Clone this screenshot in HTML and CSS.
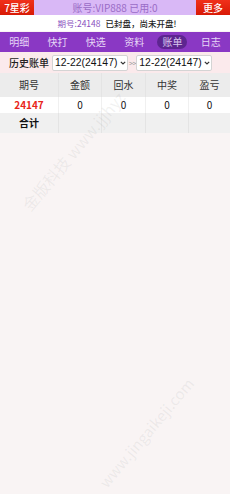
FILE: index.html
```html
<!DOCTYPE html>
<html lang="zh">
<head>
<meta charset="utf-8">
<link rel="stylesheet" href="styles.css">
</head>
<body>
<div class="page">
  <div class="topbar">
    <div class="btn">7星彩</div>
    <div class="account">账号:VIP888 已用:0</div>
    <div class="btn">更多</div>
  </div>
  <div class="status"><span class="lbl">期号:24148</span><span class="closed">已封盘，尚未开盘!</span></div>
  <div class="nav">
    <span>明细</span><span>快打</span><span>快选</span><span>资料</span><span class="active">账单</span><span>日志</span>
  </div>
  <div class="history">
    <span class="hlabel">历史账单</span>
    <span class="selwrap">
      <select class="sel"><option>12-22(24147)</option></select>
      <svg class="chev" width="6" height="4" viewBox="0 0 6 4"><path d="M0.8 0.8 L3 3 L5.2 0.8" fill="none" stroke="#333" stroke-width="1.2"/></svg>
    </span>
    <span class="arrow">&gt; &gt;</span>
    <span class="selwrap">
      <select class="sel"><option>12-22(24147)</option></select>
      <svg class="chev" width="6" height="4" viewBox="0 0 6 4"><path d="M0.8 0.8 L3 3 L5.2 0.8" fill="none" stroke="#333" stroke-width="1.2"/></svg>
    </span>
  </div>
  <div class="table">
    <div class="row head"><div>期号</div><div>金额</div><div>回水</div><div>中奖</div><div>盈亏</div></div>
    <div class="row data"><div class="issue">24147</div><div>0</div><div>0</div><div>0</div><div>0</div></div>
    <div class="row total"><div class="sum">合计</div><div></div><div></div><div></div><div></div></div>
  </div>
  <div class="wm wm1">金版科技 www.jjjhyz</div>
  <div class="wm wm2">www.jingaikeji.com</div>
</div>
</body>
</html>
```
FILE: styles.css
```css
html, body { margin: 0; padding: 0; }
body {
  width: 230px; height: 494px; overflow: hidden;
  background: #f9f4f4;
  font-family: "Noto Sans CJK SC", "Liberation Sans", sans-serif;
}
.page { position: relative; width: 230px; height: 494px; overflow: hidden; }
.topbar {
  display: flex; height: 15px; background: #d9b8f6; align-items: stretch;
}
.btn {
  width: 34px; color: #fff; font-size: 10px; line-height: 15px;
  text-align: center; font-weight: 500;
  background: linear-gradient(#f0301a, #d81a06);
}
.account { flex: 1; text-align: center; color: #9a6cc6; font-size: 10px; line-height: 15px; }
.status {
  height: 16px; background: #fff; font-size: 8.5px; line-height: 16px; text-align: center;
  padding-left: 4px; color: #222;
}
.status .lbl { color: #8a52c0; margin-right: 5px; }
.status .closed { color: #222; font-weight: 500; }
.nav {
  height: 20px; background: #8a38c4; display: flex; justify-content: space-around;
  align-items: center; color: #e6d6f6; font-size: 10px;
  margin-top: 1px;
}
.nav span { padding: 0 5px; line-height: 14px; }
.nav .active { background: #5d2590; border-radius: 7px; color: #d9c6ee; }
.history {
  height: 21px; background: #fbeaec; display: flex; align-items: center;
  font-size: 10px; color: #222; padding-left: 9px;
}
.hlabel { margin-right: 3px; font-weight: 500; }
.selwrap { position: relative; display: inline-block; height: 16px; }
.sel {
  -webkit-appearance: none; appearance: none;
  font-family: "Liberation Sans", sans-serif; font-size: 10.4px; height: 16px; width: 76px;
  padding: 0 7px 0 2px; border: 1px solid #d4d4d4; border-radius: 2px; background: #fff; color: #111;
  line-height: 14px; box-sizing: border-box; display: block;
}
.chev { position: absolute; right: 2px; top: 6px; }
.arrow { font-size: 7px; color: #999; margin: 0 1px; letter-spacing: -1px; }
.row { display: grid; grid-template-columns: 58px 43px 44px 43px 42px; }
.row div { text-align: center; border-left: 1px solid #e4e4e4; }
.row div:first-child { border-left: none; }
.head { background: #ececec; height: 24px; line-height: 24px; font-size: 10px; color: #333; }
.data { background: #fff; height: 16px; line-height: 16px; font-size: 10px; color: #111; }
.data div { border-left-color: #f0f0f0; }
.issue { color: #e8251a; font-weight: bold; }
.total { background: #f0f0f0; height: 20px; line-height: 20px; font-size: 10px; color: #111; }
.sum { font-weight: bold; }
.wm {
  position: absolute; color: rgba(150,150,150,0.13); font-size: 16px; white-space: nowrap;
  transform: rotate(-50deg); transform-origin: left top; pointer-events: none;
}
.wm1 { left: 16px; top: 200px; }
.wm2 { left: 94px; top: 478px; font-size: 15px; }
```
